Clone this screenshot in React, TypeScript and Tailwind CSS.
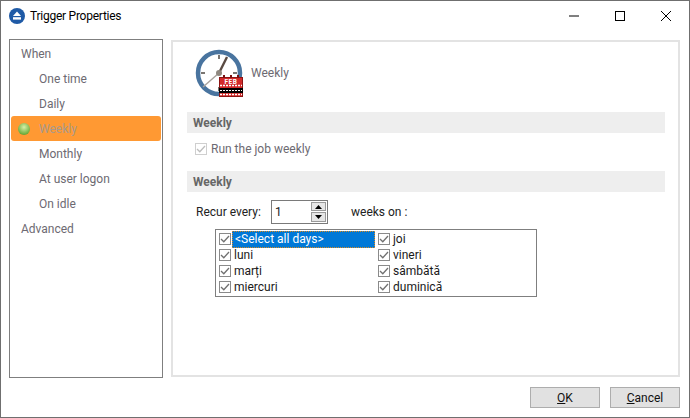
const F = "font-['Roboto',sans-serif]";

function Check({ muted = false }: { muted?: boolean }) {
  return (
    <svg width="12" height="12" viewBox="0 0 12 12" className="shrink-0">
      <rect x="0.5" y="0.5" width="11" height="11" fill="#fff" stroke={muted ? "#cfcfcf" : "#8a8a8a"} />
      <path d="M2 6 L4.8 8.8 L10 3" fill="none" stroke={muted ? "#bdbdbd" : "#707070"} strokeWidth="1.3" />
    </svg>
  );
}

function DayCell({ label, selected = false }: { label: string; selected?: boolean }) {
  return (
    <div className="flex h-4 items-center">
      <div className="ml-[3px] mr-[1px]"><Check /></div>
      <span
        className={
          selected
            ? "flex h-[17px] w-[144px] items-center border border-dotted border-[#d98a20] bg-[#0078d7] pl-[2px] text-white"
            : "pl-[2px] text-[#1a1a1a]"
        }
      >
        {label}
      </span>
    </div>
  );
}

function NavItem({ label, top = false }: { label: string; top?: boolean }) {
  return (
    <div className={`flex h-[25px] items-center text-[#6d6a72] ${top ? "pl-[10px]" : "pl-[28px]"}`}>{label}</div>
  );
}

function Band({ label }: { label: string }) {
  return (
    <div className="flex h-[21px] items-center bg-[#eeeeee] pl-[6px] font-bold text-[#666666]">{label}</div>
  );
}

function ClockIcon() {
  return (
    <svg width="50" height="48" viewBox="0 0 50 48" className="shrink-0">
      <circle cx="24" cy="24" r="21" fill="#fff" stroke="#49749f" strokeWidth="4.5" />
      <path d="M24 6v4M24 38v4M6 24h4M38 24h4" stroke="#7a7570" strokeWidth="2" />
      <path d="M24 24 L32 8" stroke="#5a4a42" strokeWidth="2.4" />
      <path d="M24 24 L8 38" stroke="#a9a29c" strokeWidth="1.4" />
      <circle cx="24" cy="24" r="3" fill="#8f8880" />
      <rect x="24.5" y="28.5" width="23" height="19" fill="#d22a2a" stroke="#8c1414" />
      <path d="M29 26v3M36 26v3M43 26v3" stroke="#7a1010" strokeWidth="2" />
      <text x="36" y="34.5" textAnchor="middle" fontSize="6.5" fontWeight="700" fill="#fff" letterSpacing="0.6">FEB</text>
      <path d="M25 36.5h22M25 45.5h22" stroke="#fff" strokeWidth="1.5" strokeDasharray="2 1" />
      <rect x="24" y="39" width="24" height="5" fill="#000" />
      <path d="M25 41.5h22" stroke="#fff" strokeWidth="1" strokeDasharray="2 1" />
    </svg>
  );
}

export default function App() {
  return (
    <div className={`${F} flex h-[418px] w-[690px] flex-col border border-[#6f6f6f] bg-white text-[12px] leading-4`}>
      <div className="flex h-[30px] shrink-0 items-center bg-white">
        <svg width="16" height="16" viewBox="0 0 16 16" className="ml-[8px] mr-[5px] shrink-0">
          <circle cx="8" cy="8" r="8" fill="#1f5aa6" />
          <path d="M8 3.6 L12 8 H4 Z" fill="#fff" />
          <rect x="4" y="9.2" width="8" height="2.4" fill="#fff" />
        </svg>
        <span className="tracking-[-0.25px] text-[#000]">Trigger Properties</span>
        <div className="ml-auto flex h-full items-center">
          <svg width="46" height="30" viewBox="0 0 46 30"><path d="M18 15h10" stroke="#000" /></svg>
          <svg width="46" height="30" viewBox="0 0 46 30"><rect x="18.5" y="10.5" width="9" height="9" fill="none" stroke="#000" /></svg>
          <svg width="46" height="30" viewBox="0 0 46 30"><path d="M18 10l10 10M28 10l-10 10" stroke="#000" /></svg>
        </div>
      </div>

      <div className="flex flex-1 gap-2 pl-2 pr-[9px] pt-2">
        <div className="flex h-[339px] w-[154px] shrink-0 flex-col border border-[#7f7f7f] bg-white pl-[1px] pr-[1px] pt-[1px]">
          <NavItem label="When" top />
          <NavItem label="One time" />
          <NavItem label="Daily" />
          <div className="flex h-[25px] items-center rounded-[3px] bg-[#ff9933] pl-[7px] text-[#a89a8c]">
            <span className="mr-[9px] h-[12px] w-[12px] rounded-full bg-[radial-gradient(circle_at_50%_35%,#d7f0a8,#6fae3f_70%,#3f7a2a)]" />
            Weekly
          </div>
          <NavItem label="Monthly" />
          <NavItem label="At user logon" />
          <NavItem label="On idle" />
          <NavItem label="Advanced" top />
        </div>

        <div className="mt-[1px] flex h-[337px] flex-1 flex-col border-2 border-[#e3e3e3] bg-white pl-[14px] pr-[13px] text-[#444444]">
          <div className="flex h-[70px] items-center pb-[8px] pl-[8px]">
            <ClockIcon />
            <span className="ml-[6px] text-[#6d6a72]">Weekly</span>
          </div>
          <Band label="Weekly" />
          <div className="flex h-[38px] items-center pb-[6px] pl-[8px] text-[#6d6a72]">
            <Check muted />
            <span className="ml-[4px]">Run the job weekly</span>
          </div>
          <Band label="Weekly" />

          <div className="mt-[8px] flex h-[24px] items-center pl-[9px] text-[#222222]">
            <span className="w-[75px]">Recur every:</span>
            <div className="flex h-[24px] w-[57px] items-center justify-between border border-[#7a7a7a] pl-[3px] pr-[1px]">
              <span>1</span>
              <div className="flex w-[15px] flex-col gap-[1px]">
                <div className="flex h-[9px] items-center justify-center border border-[#9a9a9a] bg-[#e6e6e6]">
                  <svg width="7" height="4" viewBox="0 0 7 4"><path d="M3.5 0L7 4H0z" fill="#000" /></svg>
                </div>
                <div className="flex h-[10px] items-center justify-center border border-[#9a9a9a] bg-[#e6e6e6]">
                  <svg width="7" height="4" viewBox="0 0 7 4"><path d="M0 0h7L3.5 4z" fill="#000" /></svg>
                </div>
              </div>
            </div>
            <span className="ml-[23px]">weeks on :</span>
          </div>

          <div className="ml-[28px] mt-[5px] grid h-[68px] w-[322px] grid-cols-[159px_1fr] content-start border border-[#7f7f7f] pt-[1px]">
            <DayCell label="<Select all days>" selected />
            <DayCell label="joi" />
            <DayCell label="luni" />
            <DayCell label="vineri" />
            <DayCell label="marți" />
            <DayCell label="sâmbătă" />
            <DayCell label="miercuri" />
            <DayCell label="duminică" />
          </div>
        </div>
      </div>

      <div className="flex h-[41px] shrink-0 items-start justify-end gap-[10px] pr-[9px] pt-[9px]">
        <button className="h-[21px] w-[70px] border border-[#adadad] bg-[#e1e1e1] text-[#111111]"><u>O</u>K</button>
        <button className="h-[21px] w-[70px] border border-[#adadad] bg-[#e1e1e1] text-[#111111]"><u>C</u>ancel</button>
      </div>
    </div>
  );
}
